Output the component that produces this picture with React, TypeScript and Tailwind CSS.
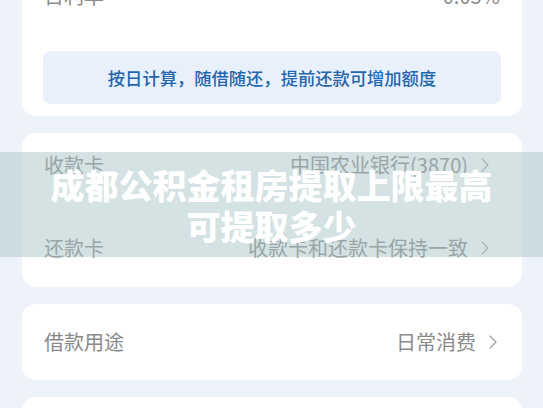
import React from "react";

const Chevron = () => (
  <svg width="8" height="14" viewBox="0 0 8 14" fill="none" className="shrink-0">
    <path d="M1 1l6 6-6 6" stroke="#a3a3a3" strokeWidth="1.3" strokeLinecap="round" strokeLinejoin="round" />
  </svg>
);

const Row = ({ label, value, h = "h-[40px]" }: { label: string; value: string; h?: string }) => (
  <div className={`flex items-center justify-between ${h}`}>
    <span>{label}</span>
    <span className="flex items-center gap-[13px]">
      {value}
      <Chevron />
    </span>
  </div>
);

export default function App() {
  return (
    <div
      className="relative w-[543px] h-[408px] overflow-hidden bg-[#eef2f9] text-[20px] text-[#8a8a8a]"
      style={{ fontFamily: '"Noto Sans CJK SC", "Noto Sans", sans-serif' }}
    >
      <div className="flex flex-col gap-[17px] pl-[22px] pr-[21px]">
        {/* rate card, cut off at the top */}
        <div className="-mt-[60px] rounded-[14px] bg-white px-[22px] pt-[36px] pb-[12px]">
          <div className="flex items-center justify-between h-[40px]">
            <span>日利率</span>
            <span>0.05%</span>
          </div>
          <div className="mt-[35px] -mx-[1px] flex h-[53px] items-center justify-center rounded-[8px] bg-[#e8f0fc] text-[17.3px] font-medium text-[#2466ad]">
            按日计算，随借随还，提前还款可增加额度
          </div>
        </div>

        <div className="flex flex-col gap-[43px] rounded-[14px] bg-white pl-[22px] pr-[33px] pt-[12px] pb-[19px] text-[#858585]">
          <Row label="收款卡" value="中国农业银行(3870)" />
          <Row label="还款卡" value="收款卡和还款卡保持一致" />
        </div>

        <div className="rounded-[14px] bg-white pl-[22px] pr-[25px]">
          <Row label="借款用途" value="日常消费" h="h-[76px]" />
        </div>

        <div className="h-[60px] rounded-[14px] bg-white" />
      </div>

      <div className="absolute left-0 right-0 top-[152px] flex h-[105px] flex-col items-center justify-center bg-[rgba(170,198,200,0.5)]">
        <p className="text-center text-[34px] font-black leading-[41px] text-white">
          成都公积金租房提取上限最高
          <br />
          可提取多少
        </p>
      </div>
    </div>
  );
}
